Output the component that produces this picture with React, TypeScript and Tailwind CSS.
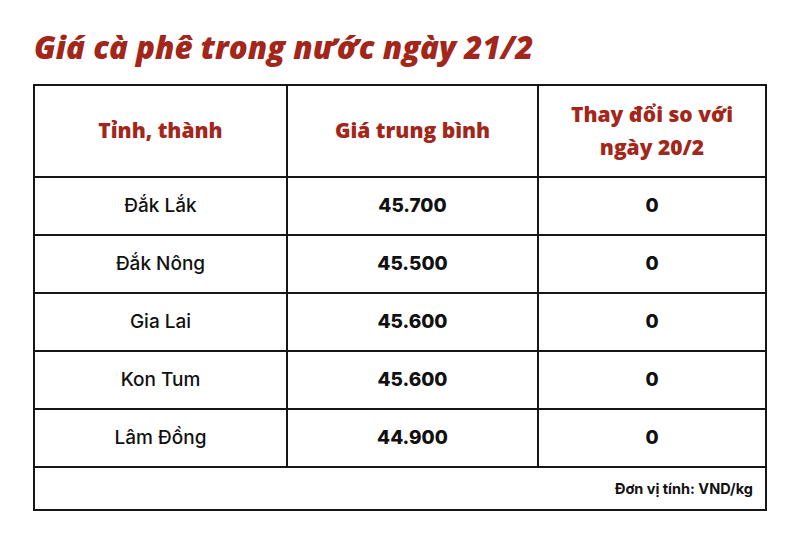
const rows = [
  { name: "Đắk Lắk", price: "45.700", change: "0" },
  { name: "Đắk Nông", price: "45.500", change: "0" },
  { name: "Gia Lai", price: "45.600", change: "0" },
  { name: "Kon Tum", price: "45.600", change: "0" },
  { name: "Lâm Đồng", price: "44.900", change: "0" },
];

export default function App() {
  return (
    <main className="w-[800px] h-[533px] bg-white px-[33px] pt-[26px] font-['Inter',sans-serif]">
      <h1 className="h-[58px] pl-[1px] text-[31.3px] leading-[42px] font-extrabold italic text-[#a3261a] font-['Open_Sans',sans-serif]">
        Giá cà phê trong nước ngày 21/2
      </h1>

      <div className="w-[734px] border-2 border-[#161616]">
        <div className="grid grid-cols-[253px_251px_226px] h-[92px] border-b-2 border-[#161616] text-[21px] font-extrabold text-[#a3261a] font-['Open_Sans',sans-serif]">
          <div className="flex items-center justify-center border-r-2 border-[#161616]">Tỉnh, thành</div>
          <div className="flex items-center justify-center border-r-2 border-[#161616]">Giá trung bình</div>
          <div className="flex items-center justify-center text-center leading-[33px]">
            Thay đổi so với
            <br />
            ngày 20/2
          </div>
        </div>

        {rows.map((r) => (
          <div
            key={r.name}
            className="grid grid-cols-[253px_251px_226px] h-[58px] border-b-2 border-[#161616] text-[19px] text-[#111]"
          >
            <div className="flex items-center justify-center border-r-2 border-[#161616] font-medium">{r.name}</div>
            <div className="flex items-center justify-center border-r-2 border-[#161616] font-extrabold">{r.price}</div>
            <div className="flex items-center justify-center font-extrabold">{r.change}</div>
          </div>
        ))}

        <div className="h-[41px] flex items-center justify-end pr-[12px] text-[14.5px] font-bold text-[#111]">
          Đơn vị tính: VND/kg
        </div>
      </div>
    </main>
  );
}
